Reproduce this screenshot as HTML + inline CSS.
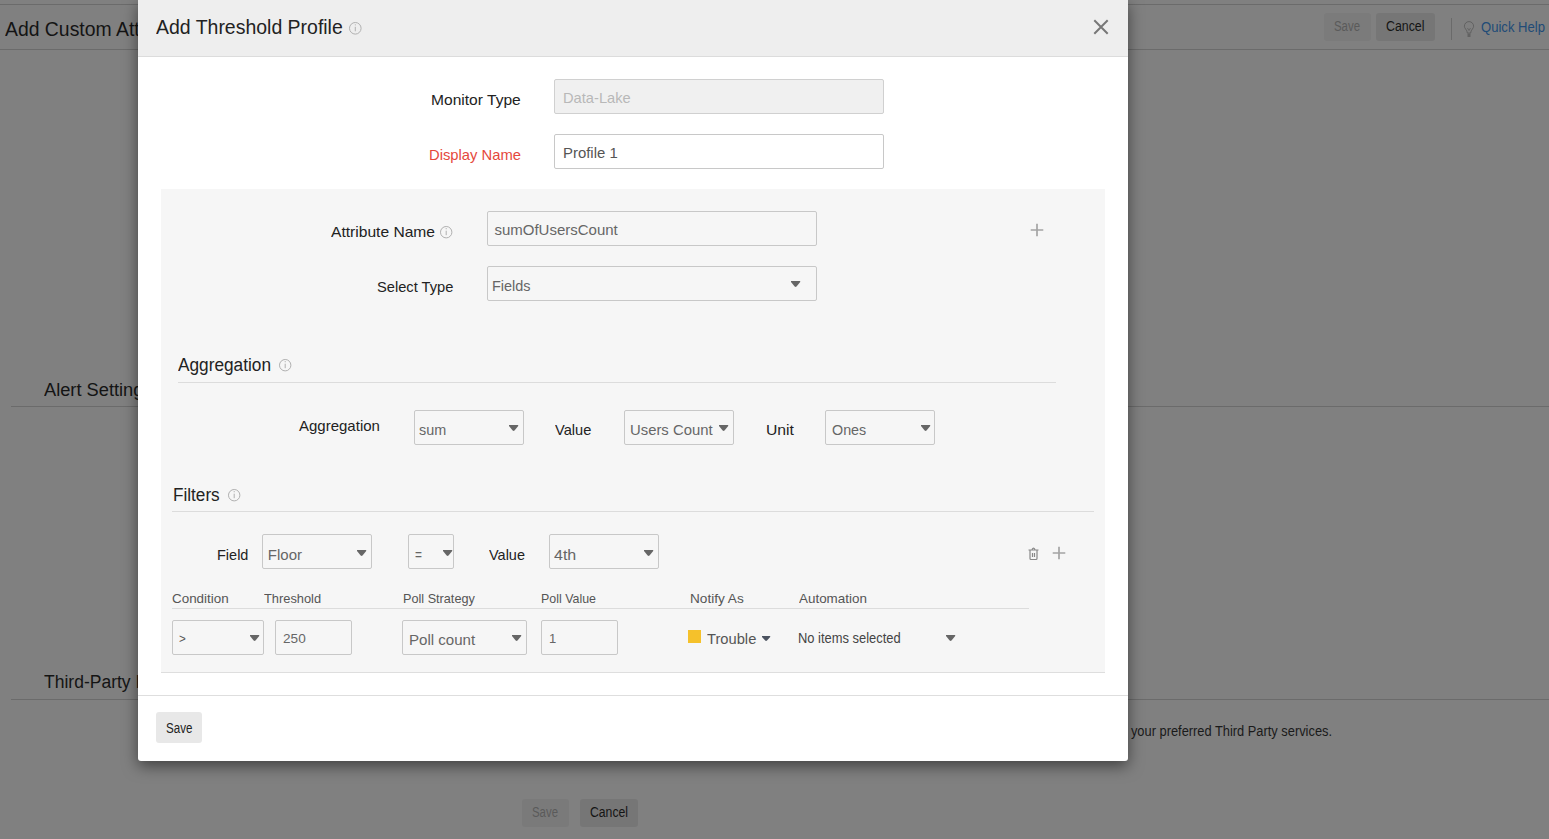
<!DOCTYPE html>
<html><head><meta charset="utf-8"><style>
html,body{margin:0;padding:0}
body{width:1549px;height:839px;overflow:hidden;position:relative;background:#808080;font-family:"Liberation Sans",sans-serif}
.t{position:absolute;white-space:nowrap;line-height:1;transform-origin:0 0}
.b{position:absolute;display:block}
</style></head><body>
<div class="b" style="left:0px;top:4px;width:1549px;height:1px;background:#6b6b6b"></div>
<div class="b" style="left:0px;top:49px;width:1549px;height:1px;background:#6b6b6b"></div>
<div class="t" style="left:5.00px;top:19.07px;font-size:20px;color:#141414;transform:scaleX(0.9691);">Add Custom Attribute</div>
<div class="b" style="left:1324px;top:13px;width:47px;height:28px;background:#7b7b7b;border-radius:3px"></div>
<div class="t" style="left:1334.00px;top:19.15px;font-size:14px;color:#5a5a5a;transform:scaleX(0.8150);">Save</div>
<div class="b" style="left:1376px;top:13px;width:59px;height:28px;background:#767676;border-radius:3px"></div>
<div class="t" style="left:1386.00px;top:19.15px;font-size:14px;color:#141414;transform:scaleX(0.8830);">Cancel</div>
<div class="b" style="left:1451px;top:18px;width:1px;height:22px;background:#6a6a6a"></div>
<div class="t" style="left:1481.00px;top:20.15px;font-size:14px;color:#214b77;transform:scaleX(0.9343);">Quick Help</div>
<svg class="b" style="left:1463px;top:21px" width="12" height="17" viewBox="0 0 12 17"><path d="M4.3 12 Q4.2 9.8 2.6 8 Q1.4 6.6 1.4 5.2 A4.6 4.6 0 0 1 10.6 5.2 Q10.6 6.6 9.4 8 Q7.8 9.8 7.7 12 Z" fill="none" stroke="#5e5e5e" stroke-width="0.9"/><path d="M4.5 7 L6 9.5 L7.5 7" fill="none" stroke="#5e5e5e" stroke-width="0.8"/><rect x="4.5" y="12.5" width="3" height="3.5" fill="#626262"/></svg>
<div class="t" style="left:43.50px;top:380.76px;font-size:18px;color:#141414;transform:scaleX(1.0135);">Alert Settings</div>
<div class="b" style="left:11px;top:406px;width:1538px;height:1px;background:#6b6b6b"></div>
<div class="t" style="left:44.00px;top:672.76px;font-size:18px;color:#141414;transform:scaleX(0.9730);">Third-Party Integrations</div>
<div class="b" style="left:11px;top:699px;width:1538px;height:1px;background:#6b6b6b"></div>
<div class="t" style="left:1030.95px;top:724.15px;font-size:14px;color:#1a1a1a;transform:scaleX(0.9175);">Forward alerts to your preferred Third Party services.</div>
<div class="b" style="left:522px;top:799px;width:47px;height:28px;background:#7a7a7a;border-radius:3px"></div>
<div class="t" style="left:532.40px;top:805.15px;font-size:14px;color:#5a5a5a;transform:scaleX(0.8150);">Save</div>
<div class="b" style="left:580px;top:799px;width:58px;height:28px;background:#767676;border-radius:3px"></div>
<div class="t" style="left:590.00px;top:805.15px;font-size:14px;color:#141414;transform:scaleX(0.8716);">Cancel</div>
<div class="b" style="left:138px;top:0;width:990px;height:761px;background:#fff;border-radius:0 0 3px 3px;box-shadow:0 5px 15px rgba(0,0,0,.5)"></div>
<div class="b" style="left:138px;top:0px;width:990px;height:56px;background:#eeeeee"></div>
<div class="b" style="left:138px;top:56px;width:990px;height:1px;background:#dcdcdc"></div>
<div class="t" style="left:155.70px;top:17.07px;font-size:20px;color:#222;transform:scaleX(0.9729);">Add Threshold Profile</div>
<svg class="b" style="left:348.4px;top:20.9px" width="14.6" height="14.6" viewBox="0 0 14.6 14.6"><circle cx="7.3" cy="7.3" r="5.8" fill="none" stroke="#b0b0b0" stroke-width="1"/><line x1="7.3" y1="5.8" x2="7.3" y2="10.3" stroke="#b0b0b0" stroke-width="1"/><circle cx="7.3" cy="3.8" r="0.6" fill="#b0b0b0"/></svg>
<svg class="b" style="left:1092px;top:18px" width="18" height="18" viewBox="0 0 18 18"><path d="M2.3 2.3 L15.7 15.7 M15.7 2.3 L2.3 15.7" stroke="#777" stroke-width="2"/></svg>
<div class="t" style="left:431.30px;top:92.30px;font-size:15px;color:#222;transform:scaleX(1.0382);">Monitor Type</div>
<div class="b" style="left:554px;top:79px;width:330px;height:35px;background:#f0f0f0;border:1px solid #d0d0d0;border-radius:2px;box-sizing:border-box"></div>
<div class="t" style="left:562.50px;top:90.30px;font-size:15px;color:#b8b8b8;transform:scaleX(0.9783);">Data-Lake</div>
<div class="t" style="left:429.00px;top:147.30px;font-size:15px;color:#e5483c;transform:scaleX(0.9850);">Display Name</div>
<div class="b" style="left:554px;top:134px;width:330px;height:35px;background:#fff;border:1px solid #c8c8c8;border-radius:2px;box-sizing:border-box"></div>
<div class="t" style="left:562.50px;top:145.30px;font-size:15px;color:#555;transform:scaleX(0.9945);">Profile 1</div>
<div class="b" style="left:161px;top:189px;width:944px;height:484px;background:#f6f6f6;border-bottom:1px solid #dedede;box-sizing:border-box"></div>
<div class="t" style="left:331.00px;top:224.30px;font-size:15px;color:#222;transform:scaleX(1.0400);">Attribute Name</div>
<svg class="b" style="left:439.2px;top:224.8px" width="14.4" height="14.4" viewBox="0 0 14.4 14.4"><circle cx="7.2" cy="7.2" r="5.7" fill="none" stroke="#b0b0b0" stroke-width="1"/><line x1="7.2" y1="5.7" x2="7.2" y2="10.2" stroke="#b0b0b0" stroke-width="1"/><circle cx="7.2" cy="3.7" r="0.6" fill="#b0b0b0"/></svg>
<div class="b" style="left:487px;top:211px;width:330px;height:35px;background:#f6f6f6;border:1px solid #c8c8c8;border-radius:2px;box-sizing:border-box"></div>
<div class="t" style="left:494.40px;top:222.30px;font-size:15px;color:#666;">sumOfUsersCount</div>
<svg class="b" style="left:1028.7px;top:222.2px" width="16" height="16" viewBox="0 0 16 16"><path d="M1.7000000000000002 8.0 H14.3 M8.0 1.7000000000000002 V14.3" stroke="#a4a4a4" stroke-width="1.7"/></svg>
<div class="t" style="left:377.00px;top:279.30px;font-size:15px;color:#222;transform:scaleX(0.9782);">Select Type</div>
<div class="b" style="left:487px;top:266px;width:330px;height:35px;background:#f6f6f6;border:1px solid #c8c8c8;border-radius:2px;box-sizing:border-box"></div>
<div class="t" style="left:492.30px;top:278.30px;font-size:15px;color:#666;transform:scaleX(0.9650);">Fields</div>
<svg class="b" style="left:790.9px;top:281px" width="10.2" height="7.3" viewBox="0 0 10.2 7.3"><path d="M0 0 H9.2 V1 L5.5 5.6 Q4.6 6.5 3.6999999999999997 5.6 L0 1 Z" fill="#666"/></svg>
<div class="t" style="left:177.70px;top:355.76px;font-size:18px;color:#222;transform:scaleX(0.9578);">Aggregation</div>
<svg class="b" style="left:277.8px;top:357.6px" width="14.4" height="14.4" viewBox="0 0 14.4 14.4"><circle cx="7.2" cy="7.2" r="5.7" fill="none" stroke="#b0b0b0" stroke-width="1"/><line x1="7.2" y1="5.7" x2="7.2" y2="10.2" stroke="#b0b0b0" stroke-width="1"/><circle cx="7.2" cy="3.7" r="0.6" fill="#b0b0b0"/></svg>
<div class="b" style="left:178px;top:382px;width:878px;height:1px;background:#dcdcdc"></div>
<div class="t" style="left:299.00px;top:418.30px;font-size:15px;color:#222;">Aggregation</div>
<div class="b" style="left:414px;top:410px;width:110px;height:35px;background:#f6f6f6;border:1px solid #c8c8c8;border-radius:2px;box-sizing:border-box"></div>
<div class="t" style="left:419.00px;top:422.00px;font-size:15px;color:#666;transform:scaleX(0.9611);">sum</div>
<svg class="b" style="left:508.9px;top:425px" width="10.2" height="7.3" viewBox="0 0 10.2 7.3"><path d="M0 0 H9.2 V1 L5.5 5.6 Q4.6 6.5 3.6999999999999997 5.6 L0 1 Z" fill="#666"/></svg>
<div class="t" style="left:555.30px;top:422.30px;font-size:15px;color:#222;transform:scaleX(0.9759);">Value</div>
<div class="b" style="left:624px;top:410px;width:110px;height:35px;background:#f6f6f6;border:1px solid #c8c8c8;border-radius:2px;box-sizing:border-box"></div>
<div class="t" style="left:629.60px;top:422.30px;font-size:15px;color:#666;transform:scaleX(0.9904);">Users Count</div>
<svg class="b" style="left:718.9px;top:425px" width="10.2" height="7.3" viewBox="0 0 10.2 7.3"><path d="M0 0 H9.2 V1 L5.5 5.6 Q4.6 6.5 3.6999999999999997 5.6 L0 1 Z" fill="#666"/></svg>
<div class="t" style="left:766.00px;top:422.00px;font-size:15px;color:#222;transform:scaleX(1.0487);">Unit</div>
<div class="b" style="left:825px;top:410px;width:110px;height:35px;background:#f6f6f6;border:1px solid #c8c8c8;border-radius:2px;box-sizing:border-box"></div>
<div class="t" style="left:831.70px;top:422.00px;font-size:15px;color:#666;transform:scaleX(0.9554);">Ones</div>
<svg class="b" style="left:920.9px;top:425px" width="10.2" height="7.3" viewBox="0 0 10.2 7.3"><path d="M0 0 H9.2 V1 L5.5 5.6 Q4.6 6.5 3.6999999999999997 5.6 L0 1 Z" fill="#666"/></svg>
<div class="t" style="left:173.00px;top:485.76px;font-size:18px;color:#222;transform:scaleX(0.9531);">Filters</div>
<svg class="b" style="left:226.60000000000002px;top:487.6px" width="14.4" height="14.4" viewBox="0 0 14.4 14.4"><circle cx="7.2" cy="7.2" r="5.7" fill="none" stroke="#b0b0b0" stroke-width="1"/><line x1="7.2" y1="5.7" x2="7.2" y2="10.2" stroke="#b0b0b0" stroke-width="1"/><circle cx="7.2" cy="3.7" r="0.6" fill="#b0b0b0"/></svg>
<div class="b" style="left:172px;top:511px;width:922px;height:1px;background:#dcdcdc"></div>
<div class="t" style="left:216.60px;top:547.30px;font-size:15px;color:#222;transform:scaleX(0.9662);">Field</div>
<div class="b" style="left:262px;top:534px;width:110px;height:35px;background:#f6f6f6;border:1px solid #c8c8c8;border-radius:2px;box-sizing:border-box"></div>
<div class="t" style="left:267.80px;top:546.60px;font-size:15px;color:#666;">Floor</div>
<svg class="b" style="left:356.9px;top:550px" width="10.2" height="7.3" viewBox="0 0 10.2 7.3"><path d="M0 0 H9.2 V1 L5.5 5.6 Q4.6 6.5 3.6999999999999997 5.6 L0 1 Z" fill="#666"/></svg>
<div class="b" style="left:408px;top:534px;width:46px;height:35px;background:#f6f6f6;border:1px solid #c8c8c8;border-radius:2px;box-sizing:border-box"></div>
<div class="t" style="left:414.80px;top:546.60px;font-size:15px;color:#666;transform:scaleX(0.7955);">=</div>
<svg class="b" style="left:442.9px;top:550px" width="10.2" height="7.3" viewBox="0 0 10.2 7.3"><path d="M0 0 H9.2 V1 L5.5 5.6 Q4.6 6.5 3.6999999999999997 5.6 L0 1 Z" fill="#666"/></svg>
<div class="t" style="left:489.00px;top:547.30px;font-size:15px;color:#222;transform:scaleX(0.9651);">Value</div>
<div class="b" style="left:549px;top:534px;width:110px;height:35px;background:#f6f6f6;border:1px solid #c8c8c8;border-radius:2px;box-sizing:border-box"></div>
<div class="t" style="left:554.30px;top:546.60px;font-size:15px;color:#666;transform:scaleX(1.0670);">4th</div>
<svg class="b" style="left:643.9px;top:550px" width="10.2" height="7.3" viewBox="0 0 10.2 7.3"><path d="M0 0 H9.2 V1 L5.5 5.6 Q4.6 6.5 3.6999999999999997 5.6 L0 1 Z" fill="#666"/></svg>
<svg class="b" style="left:1027px;top:546px" width="13" height="15" viewBox="0 0 13 15"><path d="M1.5 4 H11.5 M5 3.5 Q6.5 0.8 8 3.5 M3 4.5 V12.5 Q3 13.5 4 13.5 H9 Q10 13.5 10 12.5 V4.5 M5.5 7 V11 M7.5 7 V11" fill="none" stroke="#888" stroke-width="1.2"/></svg>
<svg class="b" style="left:1050.6px;top:545.0px" width="16" height="16" viewBox="0 0 16 16"><path d="M1.7000000000000002 8.0 H14.3 M8.0 1.7000000000000002 V14.3" stroke="#a4a4a4" stroke-width="1.7"/></svg>
<div class="t" style="left:172.40px;top:592.00px;font-size:13px;color:#555;transform:scaleX(1.0310);">Condition</div>
<div class="t" style="left:264.40px;top:592.00px;font-size:13px;color:#555;transform:scaleX(0.9879);">Threshold</div>
<div class="t" style="left:403.00px;top:592.00px;font-size:13px;color:#555;transform:scaleX(0.9742);">Poll Strategy</div>
<div class="t" style="left:541.40px;top:592.00px;font-size:13px;color:#555;transform:scaleX(0.9549);">Poll Value</div>
<div class="t" style="left:690.30px;top:592.00px;font-size:13px;color:#555;transform:scaleX(1.0468);">Notify As</div>
<div class="t" style="left:799.30px;top:592.00px;font-size:13px;color:#555;transform:scaleX(1.0319);">Automation</div>
<div class="b" style="left:172px;top:608px;width:857px;height:1px;background:#dcdcdc"></div>
<div class="b" style="left:172px;top:620px;width:92px;height:35px;background:#f6f6f6;border:1px solid #c8c8c8;border-radius:2px;box-sizing:border-box"></div>
<div class="t" style="left:178.60px;top:632.00px;font-size:13px;color:#555;transform:scaleX(0.8947);">&gt;</div>
<svg class="b" style="left:249.9px;top:635px" width="10.2" height="7.3" viewBox="0 0 10.2 7.3"><path d="M0 0 H9.2 V1 L5.5 5.6 Q4.6 6.5 3.6999999999999997 5.6 L0 1 Z" fill="#666"/></svg>
<div class="b" style="left:275px;top:620px;width:77px;height:35px;background:#f6f6f6;border:1px solid #c8c8c8;border-radius:2px;box-sizing:border-box"></div>
<div class="t" style="left:282.80px;top:632.00px;font-size:13px;color:#666;transform:scaleX(1.0461);">250</div>
<div class="b" style="left:402px;top:620px;width:125px;height:35px;background:#f6f6f6;border:1px solid #c8c8c8;border-radius:2px;box-sizing:border-box"></div>
<div class="t" style="left:408.60px;top:632.00px;font-size:15px;color:#666;transform:scaleX(1.0046);">Poll count</div>
<svg class="b" style="left:511.9px;top:635px" width="10.2" height="7.3" viewBox="0 0 10.2 7.3"><path d="M0 0 H9.2 V1 L5.5 5.6 Q4.6 6.5 3.6999999999999997 5.6 L0 1 Z" fill="#666"/></svg>
<div class="b" style="left:541px;top:620px;width:77px;height:35px;background:#f6f6f6;border:1px solid #c8c8c8;border-radius:2px;box-sizing:border-box"></div>
<div class="t" style="left:549.00px;top:631.60px;font-size:13px;color:#666;">1</div>
<div class="b" style="left:688px;top:630px;width:13px;height:13px;background:#f5c12b"></div>
<div class="t" style="left:707.10px;top:631.30px;font-size:15px;color:#555;transform:scaleX(0.9801);">Trouble</div>
<svg class="b" style="left:761.9px;top:636px" width="9.2" height="6.3" viewBox="0 0 9.2 6.3"><path d="M0 0 H8.2 V1 L5.0 4.6 Q4.1 5.5 3.1999999999999997 4.6 L0 1 Z" fill="#4c5360"/></svg>
<div class="t" style="left:798.30px;top:630.85px;font-size:14px;color:#444;transform:scaleX(0.9227);">No items selected</div>
<svg class="b" style="left:945.9px;top:635px" width="10.2" height="7.3" viewBox="0 0 10.2 7.3"><path d="M0 0 H9.2 V1 L5.5 5.6 Q4.6 6.5 3.6999999999999997 5.6 L0 1 Z" fill="#666"/></svg>
<div class="b" style="left:138px;top:695px;width:990px;height:1px;background:#dedede"></div>
<div class="b" style="left:156px;top:712px;width:46px;height:31px;background:#e8e8e8;border-radius:3px"></div>
<div class="t" style="left:165.60px;top:721.15px;font-size:14px;color:#222;transform:scaleX(0.8276);">Save</div>
</body></html>
